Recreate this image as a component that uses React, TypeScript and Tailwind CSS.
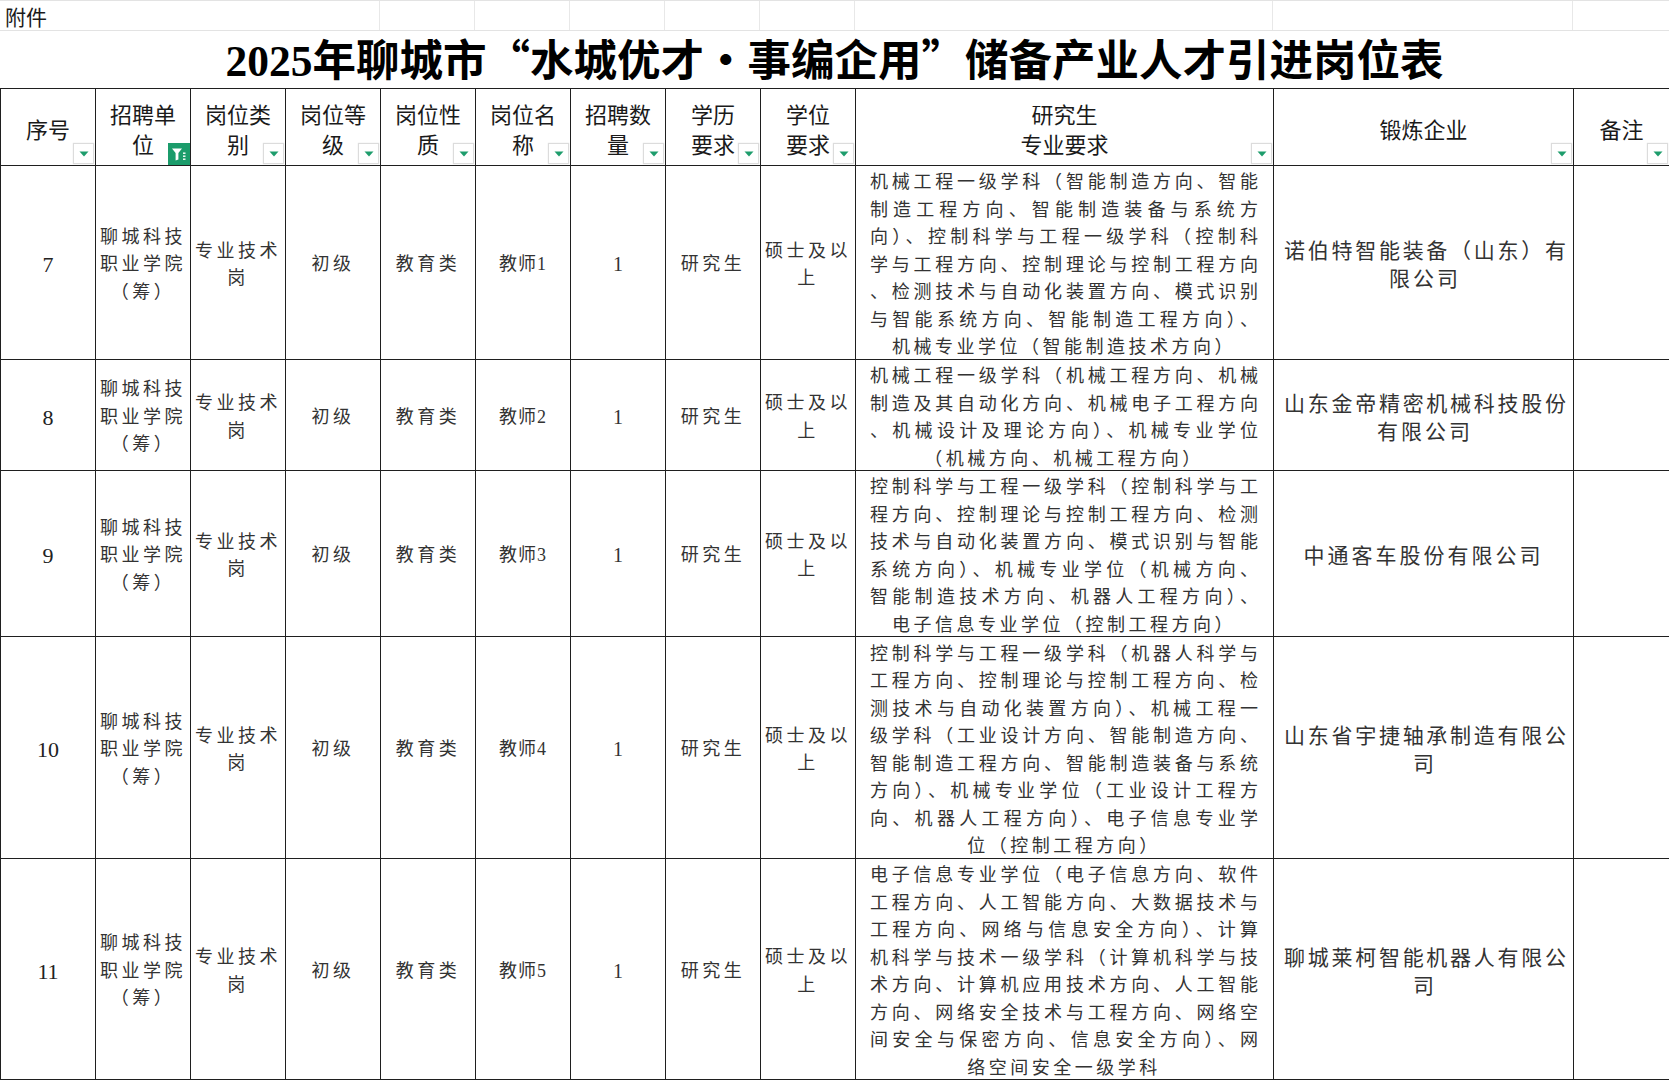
import React from "react"

const cols = [
  { w: "w-[95px]", label: ["序号"] },
  { w: "w-[95px]", label: ["招聘单", "位"], active: true },
  { w: "w-[95px]", label: ["岗位类", "别"] },
  { w: "w-[95px]", label: ["岗位等", "级"] },
  { w: "w-[95px]", label: ["岗位性", "质"] },
  { w: "w-[95px]", label: ["岗位名", "称"] },
  { w: "w-[95px]", label: ["招聘数", "量"] },
  { w: "w-[95px]", label: ["学历", "要求"] },
  { w: "w-[95px]", label: ["学位", "要求"] },
  { w: "w-[418px]", label: ["研究生", "专业要求"] },
  { w: "w-[300px]", label: ["锻炼企业"] },
  { w: "w-[96px]", label: ["备注"] },
]

const rows = [
  {
    seq: "7",
    post: "教师1",
    h: "h-[194px]",
    desc: [
      "机械工程一级学科（智能制造方向、智能",
      "制造工程方向、智能制造装备与系统方",
      "向）、控制科学与工程一级学科（控制科",
      "学与工程方向、控制理论与控制工程方向",
      "、检测技术与自动化装置方向、模式识别",
      "与智能系统方向、智能制造工程方向）、",
      "机械专业学位（智能制造技术方向）",
    ],
    company: ["诺伯特智能装备（山东）有", "限公司"],
  },
  {
    seq: "8",
    post: "教师2",
    h: "h-[111px]",
    desc: [
      "机械工程一级学科（机械工程方向、机械",
      "制造及其自动化方向、机械电子工程方向",
      "、机械设计及理论方向）、机械专业学位",
      "（机械方向、机械工程方向）",
    ],
    company: ["山东金帝精密机械科技股份", "有限公司"],
  },
  {
    seq: "9",
    post: "教师3",
    h: "h-[166px]",
    desc: [
      "控制科学与工程一级学科（控制科学与工",
      "程方向、控制理论与控制工程方向、检测",
      "技术与自动化装置方向、模式识别与智能",
      "系统方向）、机械专业学位（机械方向、",
      "智能制造技术方向、机器人工程方向）、",
      "电子信息专业学位（控制工程方向）",
    ],
    company: ["中通客车股份有限公司"],
  },
  {
    seq: "10",
    post: "教师4",
    h: "h-[222px]",
    desc: [
      "控制科学与工程一级学科（机器人科学与",
      "工程方向、控制理论与控制工程方向、检",
      "测技术与自动化装置方向）、机械工程一",
      "级学科（工业设计方向、智能制造方向、",
      "智能制造工程方向、智能制造装备与系统",
      "方向）、机械专业学位（工业设计工程方",
      "向、机器人工程方向）、电子信息专业学",
      "位（控制工程方向）",
    ],
    company: ["山东省宇捷轴承制造有限公", "司"],
  },
  {
    seq: "11",
    post: "教师5",
    h: "h-[220px]",
    desc: [
      "电子信息专业学位（电子信息方向、软件",
      "工程方向、人工智能方向、大数据技术与",
      "工程方向、网络与信息安全方向）、计算",
      "机科学与技术一级学科（计算机科学与技",
      "术方向、计算机应用技术方向、人工智能",
      "方向、网络安全技术与工程方向、网络空",
      "间安全与保密方向、信息安全方向）、网",
      "络空间安全一级学科",
    ],
    company: ["聊城莱柯智能机器人有限公", "司"],
  },
]

function FilterButton({ active }: { active?: boolean }) {
  if (active) {
    return (
      <span className="absolute bottom-0 right-0 flex h-[22px] w-[22px] items-center justify-center bg-[#1b9c6b]">
        <svg width="22" height="22" viewBox="0 0 22 22" aria-hidden="true">
          <path d="M4 5.5h10l-3.6 4.6v6.4l-2.8 1v-7.4z" fill="#fff" />
          <rect x="15" y="9.5" width="2.5" height="1.4" fill="#fff" />
          <rect x="15" y="12.5" width="2.5" height="1.4" fill="#fff" />
          <rect x="15" y="15.5" width="2.5" height="1.4" fill="#fff" />
        </svg>
      </span>
    )
  }
  return (
    <span className="absolute bottom-[1px] right-[1px] flex h-[21px] w-[21px] items-center justify-center border border-[#dcdcdc] bg-white shadow-[0_0_1px_rgba(0,0,0,0.15)]">
      <svg width="10" height="6" viewBox="0 0 10 6" aria-hidden="true">
        <path d="M0.5 0.5h9L5 5.5z" fill="#1e9d6c" />
      </svg>
    </span>
  )
}

function Desc({ lines }: { lines: string[] }) {
  // nudged down a few px like the sheet's text baseline
  return (
    <div className="relative top-[3px] pl-[14px] pr-[15px]">
      {lines.map((line, i) =>
        i === lines.length - 1 ? (
          <div key={i} className="whitespace-nowrap text-center tracking-[3.5px]">
            {line}
          </div>
        ) : (
          <div key={i} className="whitespace-nowrap text-justify [text-align-last:justify]">
            {line}
          </div>
        ),
      )}
    </div>
  )
}

function Company({ lines }: { lines: string[] }) {
  if (lines.length === 1) {
    return <div className="whitespace-nowrap text-center tracking-[3px]">{lines[0]}</div>
  }
  return (
    <div className="pl-[10px] pr-[7px]">
      <div className="whitespace-nowrap text-justify [text-align-last:justify]">{lines[0]}</div>
      <div className="whitespace-nowrap text-center tracking-[3px]">{lines[1]}</div>
    </div>
  )
}

export default function App() {
  const cell = "border border-[#1f1f1f] p-0 align-middle text-center"

  return (
    <div className="h-[1080px] w-[1669px] overflow-hidden bg-white text-[#1a1a1a]">
      {/* sheet row 1 */}
      <div className="flex h-[31px] border-t border-b border-[#e3e3e3] font-['Noto_Sans_CJK_SC',sans-serif] text-[21px] leading-[31px]">
        <div className="w-[380px] border-r border-[#e8e8e8] pl-[5px]">附件</div>
        <div className="w-[95px] border-r border-[#e8e8e8]" />
        <div className="w-[95px] border-r border-[#e8e8e8]" />
        <div className="w-[95px] border-r border-[#e8e8e8]" />
        <div className="w-[95px] border-r border-[#e8e8e8]" />
        <div className="w-[95px] border-r border-[#e8e8e8]" />
        <div className="w-[418px] border-r border-[#e8e8e8]" />
        <div className="w-[300px] border-r border-[#e8e8e8]" />
        <div className="w-[96px]" />
      </div>

      {/* title */}
      <div className="flex h-[57px] items-center justify-center font-['Liberation_Serif','Noto_Sans_CJK_SC',serif] text-[43.5px] font-bold leading-none text-black">
        <span>
          2025年聊城市<span className="font-['Noto_Sans_CJK_SC',sans-serif]">“</span>水城优才
          <span className="font-['Noto_Sans_CJK_SC',sans-serif]">·</span>事编企用
          <span className="font-['Noto_Sans_CJK_SC',sans-serif]">”</span>储备产业人才引进岗位表
        </span>
      </div>

      <table className="w-[1669px] table-fixed border-collapse">
        <colgroup>
          {cols.map((c, i) => (
            <col key={i} className={c.w} />
          ))}
        </colgroup>
        <thead>
          <tr className="h-[77px]">
            {cols.map((c, i) => (
              <th
                key={i}
                className={`${cell} relative font-['Noto_Sans_CJK_SC',sans-serif] text-[22px] font-normal leading-[30px] text-[#1a1a1a]`}
              >
                <div className="pt-[1px]">
                  {c.label.map((l) => (
                    <div key={l}>{l}</div>
                  ))}
                </div>
                <FilterButton active={c.active} />
              </th>
            ))}
          </tr>
        </thead>
        <tbody className="font-['Liberation_Serif','Noto_Sans_CJK_SC',serif] text-[18px] leading-[27.5px] text-[#333]">
          {rows.map((r) => (
            <tr key={r.seq} className={r.h}>
              <td className={`${cell} pt-[5px] text-[22px] text-[#222]`}>{r.seq}</td>
              <td className={`${cell} pt-[5px] tracking-[3.5px]`}>
                <div>聊城科技</div>
                <div>职业学院</div>
                <div>（筹）</div>
              </td>
              <td className={`${cell} pt-[5px] tracking-[3.5px]`}>
                <div>专业技术</div>
                <div>岗</div>
              </td>
              <td className={`${cell} pt-[5px] tracking-[3.5px]`}>初级</td>
              <td className={`${cell} pt-[5px] tracking-[3.5px]`}>教育类</td>
              <td className={`${cell} pt-[5px] tracking-[1px]`}>{r.post}</td>
              <td className={`${cell} pt-[5px] text-[20px]`}>1</td>
              <td className={`${cell} pt-[5px] tracking-[3.5px]`}>研究生</td>
              <td className={`${cell} pt-[5px] tracking-[3.5px]`}>
                <div>硕士及以</div>
                <div>上</div>
              </td>
              <td className={cell}>
                <Desc lines={r.desc} />
              </td>
              <td className={`${cell} pt-[5px] text-[21px] leading-[28px]`}>
                <Company lines={r.company} />
              </td>
              <td className={cell} />
            </tr>
          ))}
        </tbody>
      </table>
    </div>
  )
}
